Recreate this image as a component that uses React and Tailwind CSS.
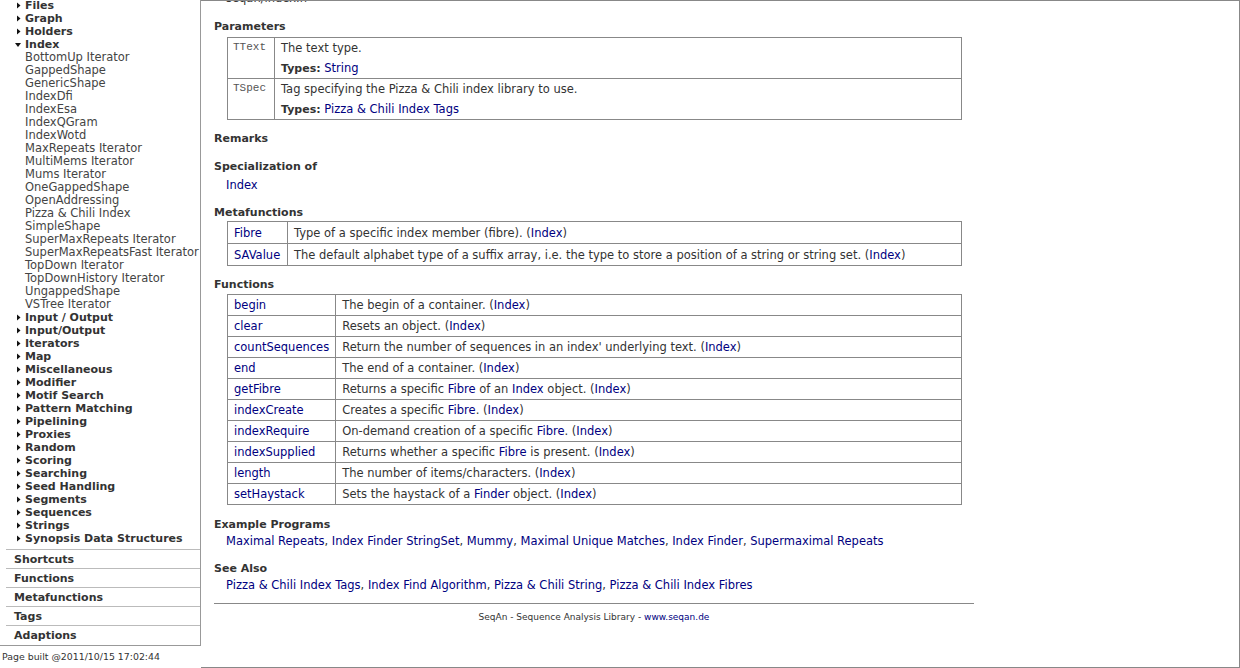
const groupsBefore = ["Files", "Graph", "Holders"];
const indexItems = [
  "BottomUp Iterator",
  "GappedShape",
  "GenericShape",
  "IndexDfi",
  "IndexEsa",
  "IndexQGram",
  "IndexWotd",
  "MaxRepeats Iterator",
  "MultiMems Iterator",
  "Mums Iterator",
  "OneGappedShape",
  "OpenAddressing",
  "Pizza & Chili Index",
  "SimpleShape",
  "SuperMaxRepeats Iterator",
  "SuperMaxRepeatsFast Iterator",
  "TopDown Iterator",
  "TopDownHistory Iterator",
  "UngappedShape",
  "VSTree Iterator",
];
const groupsAfter = [
  "Input / Output",
  "Input/Output",
  "Iterators",
  "Map",
  "Miscellaneous",
  "Modifier",
  "Motif Search",
  "Pattern Matching",
  "Pipelining",
  "Proxies",
  "Random",
  "Scoring",
  "Searching",
  "Seed Handling",
  "Segments",
  "Sequences",
  "Strings",
  "Synopsis Data Structures",
];
const sections = ["Shortcuts", "Functions", "Metafunctions", "Tags", "Adaptions"];

const functions = [
  ["begin", ["The begin of a container. (", ["Index"], ")"]],
  ["clear", ["Resets an object. (", ["Index"], ")"]],
  ["countSequences", ["Return the number of sequences in an index' underlying text. (", ["Index"], ")"]],
  ["end", ["The end of a container. (", ["Index"], ")"]],
  ["getFibre", ["Returns a specific ", ["Fibre"], " of an ", ["Index"], " object. (", ["Index"], ")"]],
  ["indexCreate", ["Creates a specific ", ["Fibre"], ". (", ["Index"], ")"]],
  ["indexRequire", ["On-demand creation of a specific ", ["Fibre"], ". (", ["Index"], ")"]],
  ["indexSupplied", ["Returns whether a specific ", ["Fibre"], " is present. (", ["Index"], ")"]],
  ["length", ["The number of items/characters. (", ["Index"], ")"]],
  ["setHaystack", ["Sets the haystack of a ", ["Finder"], " object. (", ["Index"], ")"]],
];

function Rich({ parts }) {
  return parts.map((p, i) =>
    Array.isArray(p) ? (
      <a key={i} className="text-[#000080]">
        {p[0]}
      </a>
    ) : (
      <span key={i}>{p}</span>
    )
  );
}

function Arrow({ open }) {
  return (
    <svg width="9" height="13" viewBox="0 0 9 13" className="shrink-0">
      {open ? <path d="M1 5 L7 5 L4 9 Z" fill="#111" /> : <path d="M3 3.5 L6.5 6.5 L3 9.5 Z" fill="#111" />}
    </svg>
  );
}

function Group({ label, open }) {
  return (
    <div className="flex h-[13px] items-center pl-[14px] text-[11px] font-bold leading-[13px] text-[#333]">
      <Arrow open={open} />
      <span className="ml-[2px]">{label}</span>
    </div>
  );
}

function Sidebar() {
  return (
    <div className="flex w-[201px] shrink-0 flex-col">
      <div className="h-[646px] border-r border-b border-[#999]">
        <div className="-mt-[1px]">
          {groupsBefore.map((g) => (
            <Group key={g} label={g} />
          ))}
          <Group label="Index" open />
          {indexItems.map((it) => (
            <div key={it} className="h-[13px] pl-[25px] text-[11.5px] leading-[13px] whitespace-nowrap text-[#444]">
              {it}
            </div>
          ))}
          {groupsAfter.map((g) => (
            <Group key={g} label={g} />
          ))}
        </div>
        <div className="mt-[4px] ml-[6px] border-t border-[#bbb]">
          {sections.map((s) => (
            <div key={s} className="h-[19px] border-b border-[#bbb] pl-[8px] text-[11px] leading-[19px] font-bold text-[#333] last:border-b-0">
              {s}
            </div>
          ))}
        </div>
      </div>
      <div className="pl-[2px] pt-[5px] text-[9.4px] leading-[12px] text-[#333]">Page built @2011/10/15 17:02:44</div>
    </div>
  );
}

function Heading({ children, className = "" }) {
  return <div className={`text-[11px] font-bold leading-[14px] text-[#333] ${className}`}>{children}</div>;
}

function Content() {
  return (
    <div className="h-[668px] flex-1 overflow-hidden border-t border-r border-b border-[#888] pl-[13px] text-[11.5px] text-[#333]">
      <div className="w-[760px]">
        <div className="-mt-[10px] pl-[12px] leading-[14px]">seqan/index.h</div>

        <Heading className="mt-[15px]">Parameters</Heading>
        <table className="mt-[3px] ml-[13px] w-[735px] border-collapse">
          <tbody>
            {[
              ["TText", "The text type.", "String"],
              ["TSpec", "Tag specifying the Pizza & Chili index library to use.", "Pizza & Chili Index Tags"],
            ].map(([p, d, t]) => (
              <tr key={p}>
                <td className="w-[47px] border border-[#888] px-[5px] pt-[2px] align-top font-['Liberation_Mono',monospace] text-[11px] leading-[14px] text-[#555]">
                  {p}
                </td>
                <td className="h-[41px] border border-[#888] px-[6px] pt-[3px] pb-[2px] align-top leading-[14px]">
                  <div className="h-[14px]">{d}</div>
                  <div className="mt-[6px] h-[14px]">
                    <b className="text-[11px]">Types:</b> <a className="text-[#000080]">{t}</a>
                  </div>
                </td>
              </tr>
            ))}
          </tbody>
        </table>

        <Heading className="mt-[12px]">Remarks</Heading>

        <Heading className="mt-[14px]">Specialization of</Heading>
        <div className="mt-[4px] pl-[12px] leading-[14px]">
          <a className="text-[#000080]">Index</a>
        </div>

        <Heading className="mt-[14px]">Metafunctions</Heading>
        <table className="mt-[1px] ml-[13px] w-[735px] border-collapse">
          <tbody>
            <tr>
              <td className="h-[22px] w-[60px] border border-[#888] px-[6px] leading-[14px] text-[#000080]">Fibre</td>
              <td className="h-[22px] border border-[#888] px-[6px] leading-[14px]">
                <Rich parts={["Type of a specific index member (fibre). (", ["Index"], ")"]} />
              </td>
            </tr>
            <tr>
              <td className="h-[22px] border border-[#888] px-[6px] leading-[14px] text-[#000080]">SAValue</td>
              <td className="h-[22px] border border-[#888] px-[6px] leading-[14px] whitespace-nowrap">
                <Rich
                  parts={[
                    "The default alphabet type of a suffix array, i.e. the type to store a position of a string or string set. (",
                    ["Index"],
                    ")",
                  ]}
                />
              </td>
            </tr>
          </tbody>
        </table>

        <Heading className="mt-[12px]">Functions</Heading>
        <table className="mt-[2px] ml-[13px] w-[735px] border-collapse">
          <tbody>
            {functions.map(([name, parts]) => (
              <tr key={name}>
                <td className="h-[21px] w-[104px] border border-[#888] px-[6px] leading-[14px] text-[#000080]">{name}</td>
                <td className="h-[21px] border border-[#888] px-[6px] leading-[14px]">
                  <Rich parts={parts} />
                </td>
              </tr>
            ))}
          </tbody>
        </table>

        <Heading className="mt-[13px]">Example Programs</Heading>
        <div className="mt-[2px] pl-[12px] leading-[14px]">
          <Rich
            parts={[
              ["Maximal Repeats"],
              ", ",
              ["Index Finder StringSet"],
              ", ",
              ["Mummy"],
              ", ",
              ["Maximal Unique Matches"],
              ", ",
              ["Index Finder"],
              ", ",
              ["Supermaximal Repeats"],
            ]}
          />
        </div>

        <Heading className="mt-[14px]">See Also</Heading>
        <div className="mt-[2px] pl-[12px] leading-[14px]">
          <Rich
            parts={[
              ["Pizza & Chili Index Tags"],
              ", ",
              ["Index Find Algorithm"],
              ", ",
              ["Pizza & Chili String"],
              ", ",
              ["Pizza & Chili Index Fibres"],
            ]}
          />
        </div>

        <div className="mt-[11px] border-t border-[#888]" />
        <div className="mt-[7px] text-center text-[9px] leading-[12px] text-[#333]">
          SeqAn - Sequence Analysis Library - <a className="text-[#000080]">www.seqan.de</a>
        </div>
      </div>
    </div>
  );
}

export default function App() {
  return (
    <div className="flex h-[668px] w-[1240px] overflow-hidden bg-white font-['DejaVu_Sans',Verdana,sans-serif]">
      <Sidebar />
      <Content />
    </div>
  );
}
